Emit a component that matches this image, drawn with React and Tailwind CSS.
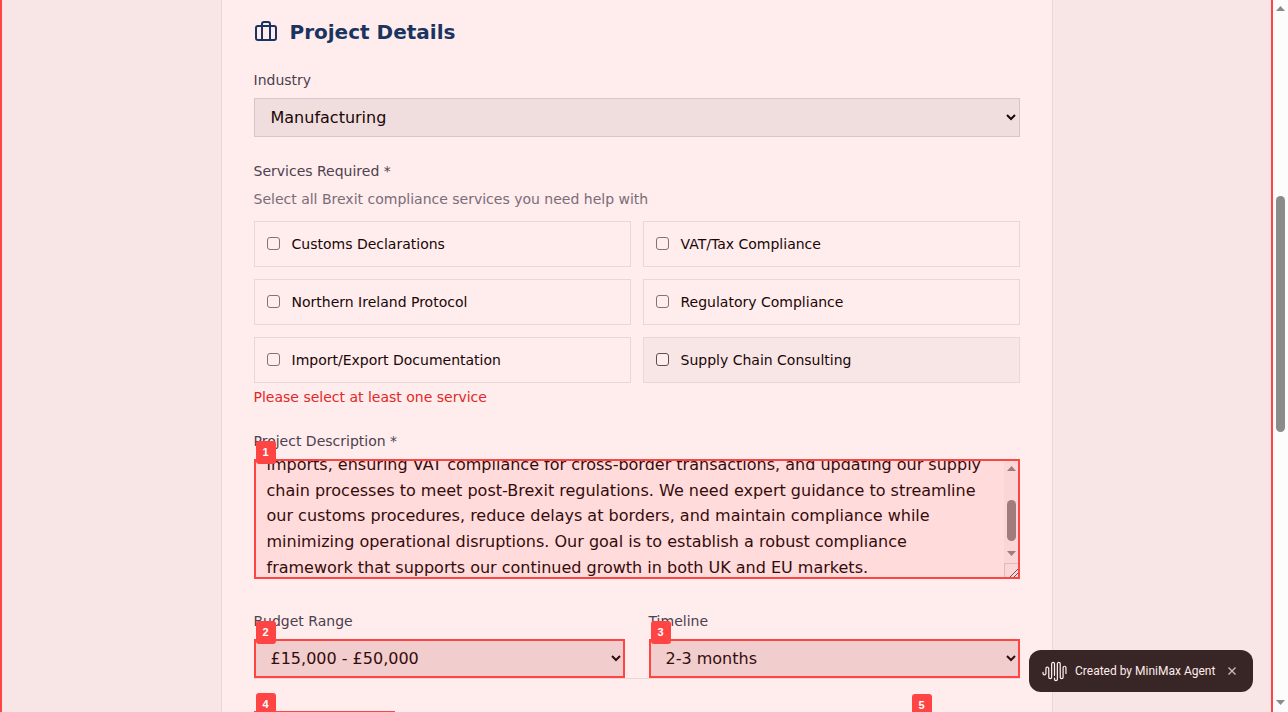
import { useEffect, useRef } from "react";

const SERVICES = [
  "Customs Declarations",
  "VAT/Tax Compliance",
  "Northern Ireland Protocol",
  "Regulatory Compliance",
  "Import/Export Documentation",
  "Supply Chain Consulting",
];

const DESCRIPTION =
  "We are a UK-based manufacturer trading with partners across the European Union. We require support with customs declarations for our exports and\nimports, ensuring VAT compliance for cross-border transactions, and updating our supply chain processes to meet post-Brexit regulations. We need expert guidance to streamline our customs procedures, reduce delays at borders, and maintain compliance while minimizing operational disruptions. Our goal is to establish a robust compliance framework that supports our continued growth in both UK and EU markets.";

const labelClass = "block text-sm text-[#374151]";
const selectClass =
  "block h-[39px] w-full border border-[#d1d5db] bg-[#efefef] px-3 text-base text-black";

function Marked({ number, className = "", children }) {
  return (
    <div className={`relative ${className}`}>
      {children}
      <div className="pointer-events-none absolute inset-0 border-2 border-[#ff4444] bg-[#ff4444]/10" />
      <span className="absolute -top-[18px] left-[2px] z-20 flex h-[23px] w-5 items-center justify-center rounded-[3px] bg-[#ff4444] font-['Liberation_Sans',sans-serif] text-[11px] font-bold text-white">
        {number}
      </span>
    </div>
  );
}

function Triangle({ down = false, className = "" }) {
  return (
    <svg viewBox="0 0 9 5" className={`h-[5px] w-[9px] ${className}`} aria-hidden="true">
      <path d={down ? "M0 0h9L4.5 5z" : "M0 5h9L4.5 0z"} fill="currentColor" />
    </svg>
  );
}

function Description() {
  const ref = useRef(null);
  useEffect(() => {
    const box = ref.current;
    box.scrollTop = box.scrollHeight - box.clientHeight - 10;
  }, []);
  return (
    <Marked number="1" className="mt-2">
      <div className="flex h-[120px] border border-[#d1d5db] bg-white">
        <textarea
          id="description"
          ref={ref}
          defaultValue={DESCRIPTION}
          className="block h-full min-w-0 grow resize-none px-3 py-2 text-base leading-[1.6] text-black outline-none [scrollbar-width:none]"
        />
        <div className="flex w-[15px] shrink-0 flex-col items-center bg-[#fafafa] text-[#8b8b8b]">
          <Triangle className="mt-[6px]" />
          <div className="mt-[29px] h-[41px] w-[9px] rounded-full bg-[#8b8b8b]" />
          <Triangle down className="mt-[10px]" />
          <svg viewBox="0 0 15 15" className="mt-auto h-[15px] w-[15px]" aria-hidden="true">
            <path d="M0 15V0.5h15M0.5 0v15" fill="none" stroke="#d9d9d9" />
            <path d="M6 14L14 6M10 14l4-4" fill="none" stroke="#555" />
          </svg>
        </div>
      </div>
    </Marked>
  );
}

function Toast() {
  return (
    <aside className="absolute right-5 bottom-5 z-10 flex h-[42px] w-56 items-center rounded-xl bg-[#222] px-[13px] font-[Roboto,sans-serif] text-xs text-white">
      <svg viewBox="0 0 26 22" className="h-[21px] w-[25px]" fill="none" stroke="currentColor" strokeWidth="1.3" strokeLinecap="round" aria-hidden="true">
        <path d="M1 12v1a1.5 1.5 0 0 0 3 0V8a1.5 1.5 0 0 1 3 0v9a1.5 1.5 0 0 0 3 0V3a1.5 1.5 0 0 1 3 0v12M13 18v1a1.5 1.5 0 0 0 3 0V3a1.5 1.5 0 0 1 3 0v14a1.5 1.5 0 0 0 3 0V7a1.5 1.5 0 0 1 3 0v6" />
      </svg>
      <span className="ml-2 whitespace-nowrap">Created by MiniMax Agent</span>
      <button aria-label="Close" className="ml-auto flex h-4 w-4 items-center justify-center text-[#ccc]">
        <svg viewBox="0 0 8 8" className="h-2 w-2" stroke="currentColor" strokeWidth="1.3" aria-hidden="true">
          <path d="M0.5 0.5l7 7M7.5 0.5l-7 7" />
        </svg>
      </button>
    </aside>
  );
}

export default function App() {
  return (
    <div className="flex h-screen overflow-hidden font-['DejaVu_Sans',sans-serif]">
      <div className="relative h-full min-w-0 grow overflow-hidden bg-[#f8f9fa]">
        <main className="mx-auto max-w-[832px] border-x border-[#e5e7eb] bg-white px-8 pt-[18px]">
          <h2 className="flex items-center gap-3 text-xl font-bold text-[#003366]">
            <svg viewBox="0 0 24 24" className="h-6 w-6" fill="none" stroke="currentColor" strokeWidth="2" strokeLinecap="round" strokeLinejoin="round" aria-hidden="true">
              <rect x="2" y="6" width="20" height="14" rx="2" />
              <path d="M16 20V4a2 2 0 0 0-2-2h-4a2 2 0 0 0-2 2v16" />
            </svg>
            Project Details
          </h2>

          <form>
            <div className="mt-6">
              <label htmlFor="industry" className={labelClass}>Industry</label>
              <select id="industry" className={`mt-2 ${selectClass}`}>
                <option>Manufacturing</option>
              </select>
            </div>

            <fieldset className="mt-6">
              <legend className={labelClass}>Services Required *</legend>
              <p className="mt-2 text-sm text-[#6b7280]">Select all Brexit compliance services you need help with</p>
              <div className="mt-3 grid grid-cols-2 gap-3">
                {SERVICES.map((name) => (
                  <label
                    key={name}
                    className="group flex items-start gap-3 border border-[#e5e7eb] p-3 text-sm text-black last:bg-[#f8f9fa]"
                  >
                    <input
                      type="checkbox"
                      className="mt-[3px] h-[13px] w-[13px] appearance-none rounded-[3px] border border-[#767676] bg-white checked:bg-[#003366] group-last:border-[#4f4f4f]"
                    />
                    {name}
                  </label>
                ))}
              </div>
              <p className="mt-1 text-sm text-[#dc2626]">Please select at least one service</p>
            </fieldset>

            <div className="mt-6">
              <label htmlFor="description" className={labelClass}>Project Description *</label>
              <Description />
            </div>

            <div className="mt-8 grid grid-cols-2 gap-6">
              <div>
                <label htmlFor="budget" className={labelClass}>Budget Range</label>
                <Marked number="2" className="mt-2">
                  <select id="budget" className={selectClass}>
                    <option>£15,000 - £50,000</option>
                  </select>
                </Marked>
              </div>
              <div>
                <label htmlFor="timeline" className={labelClass}>Timeline</label>
                <Marked number="3" className="mt-2">
                  <select id="timeline" className={selectClass}>
                    <option>2-3 months</option>
                  </select>
                </Marked>
              </div>
            </div>

            <div className="flex items-center justify-between border-t border-[#e5e7eb] pt-8 pb-8">
              <Marked number="4">
                <button type="button" aria-label="Previous" className="block h-12 w-[141px] bg-white" />
              </Marked>
              <Marked number="5">
                <button type="button" aria-label="Next" className="block h-[46px] w-[110px] bg-[#003366]" />
              </Marked>
            </div>
          </form>
        </main>
        <Toast />
        <div className="pointer-events-none absolute inset-0 z-10 border-x-2 border-[#ff4444] bg-[#ff4444]/10" />
      </div>

      <div className="flex h-full w-[15px] shrink-0 flex-col items-center bg-[#fcfcfc] text-[#8b8b8b]">
        <Triangle className="mt-[6px]" />
        <div className="mt-[185px] h-[236px] w-[9px] rounded-full bg-[#8b8b8b]" />
        <Triangle down className="mt-auto mb-[7px]" />
      </div>
    </div>
  );
}
